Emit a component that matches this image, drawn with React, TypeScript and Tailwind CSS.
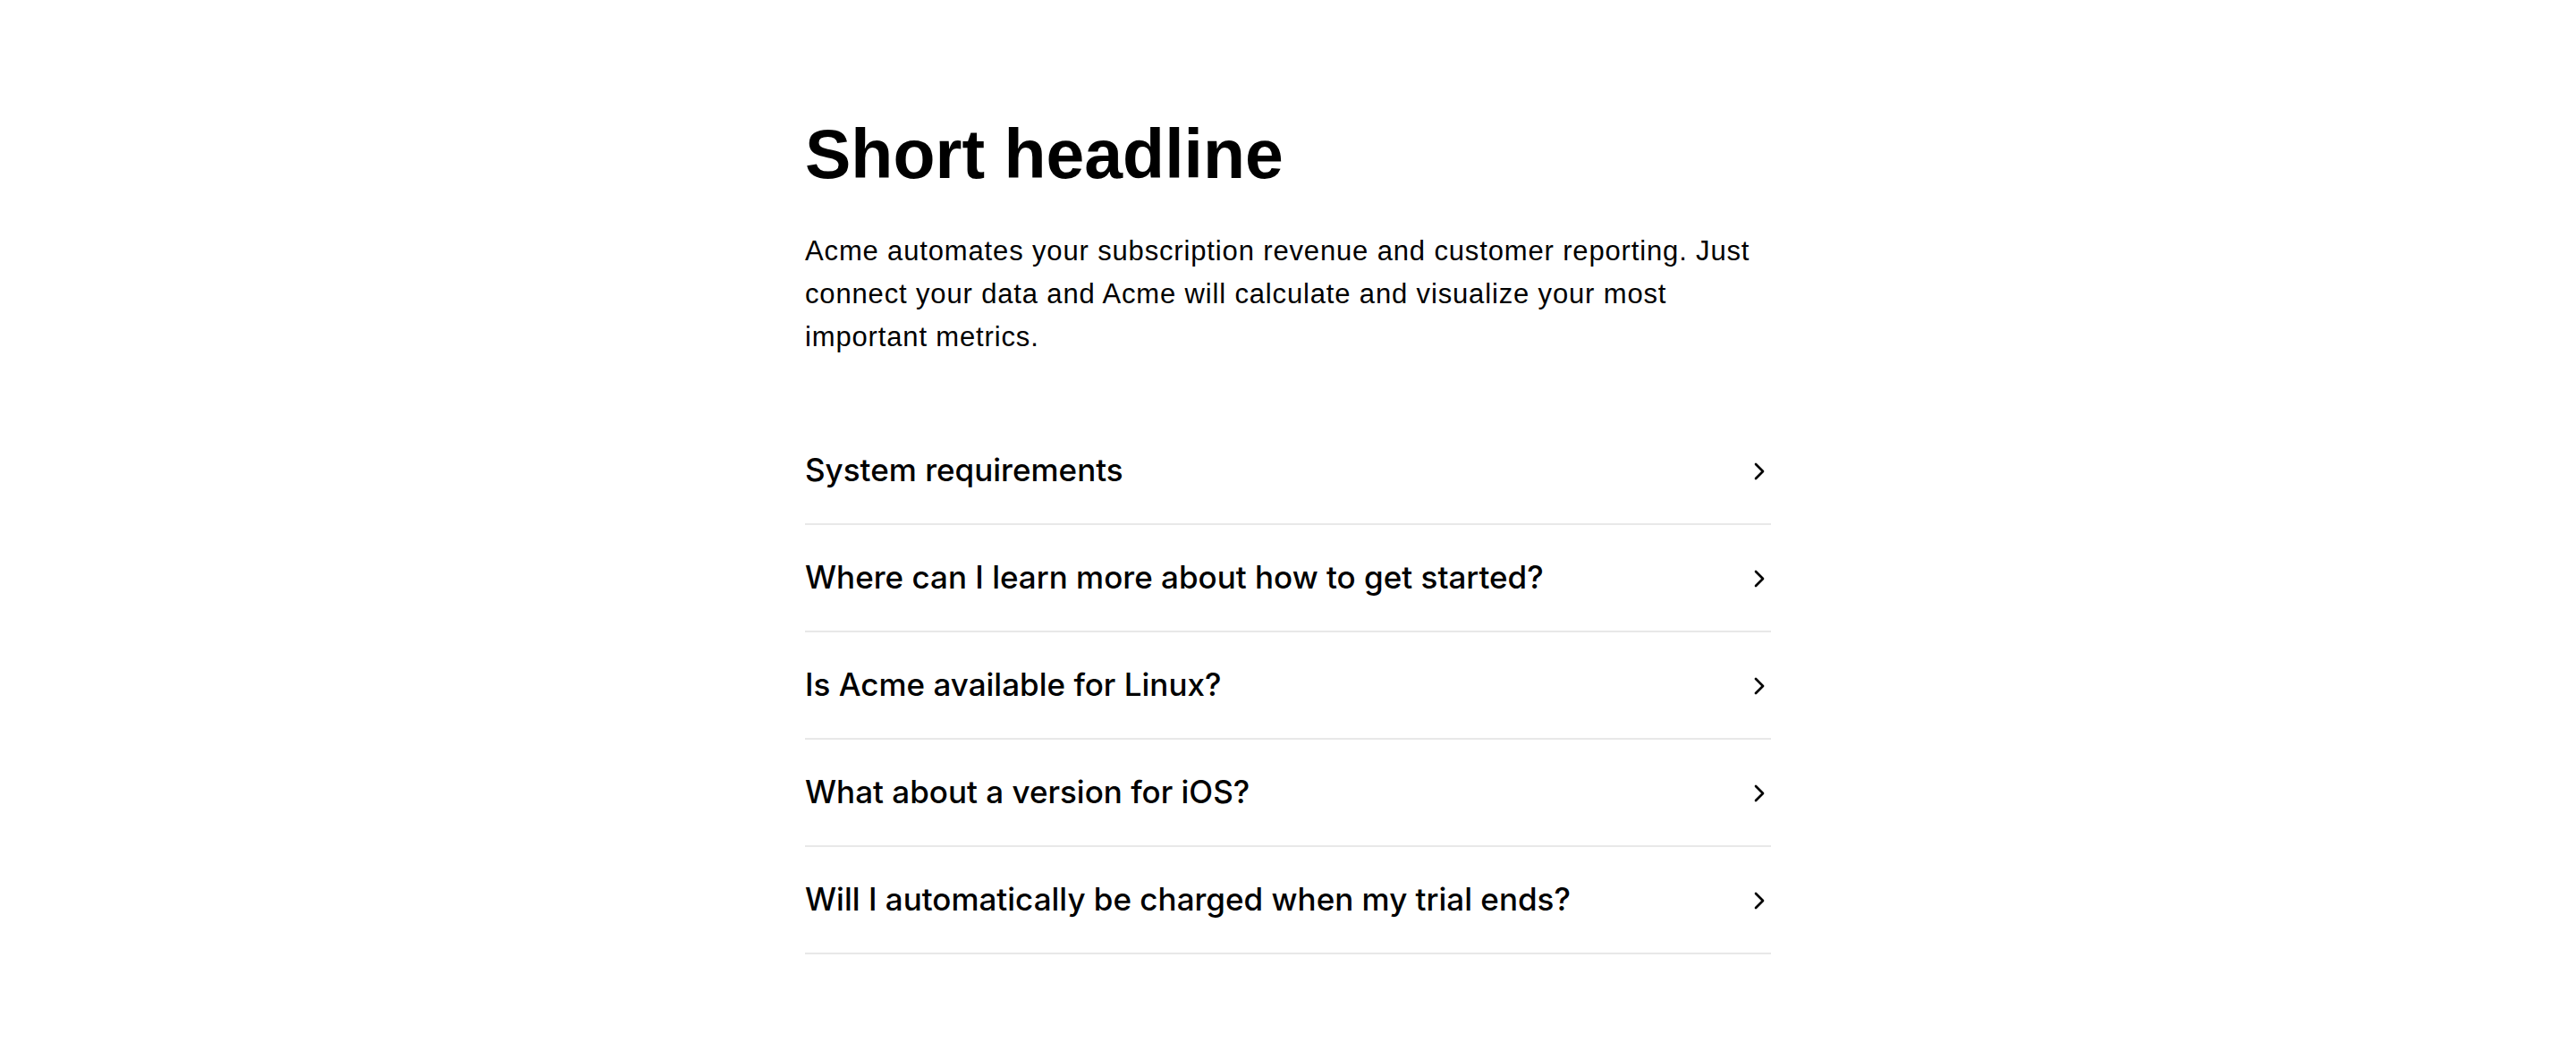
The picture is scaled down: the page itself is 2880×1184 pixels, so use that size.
import { ChevronRight } from "lucide-react";

const questions = [
  "System requirements",
  "Where can I learn more about how to get started?",
  "Is Acme available for Linux?",
  "What about a version for iOS?",
  "Will I automatically be charged when my trial ends?",
];

export default function App() {
  return (
    <div className="min-h-screen bg-white text-black font-['Liberation_Sans',Arial,sans-serif]">
      <section className="mx-auto w-[1080px] pt-[134px] pb-[100px]">
        <h1 className="text-[77px] font-bold leading-none">Short headline</h1>
        <p className="mt-[46px] text-[31px] leading-[48px] tracking-[0.85px]">
          Acme automates your subscription revenue and customer reporting. Just
          connect your data and Acme will calculate and visualize your most
          important metrics.
        </p>

        <ul className="mt-[66px]">
          {questions.map((q) => (
            <li
              key={q}
              className="flex h-[120px] items-center justify-between border-b-2 border-[#e8e8e8] pb-[2px]"
            >
              <span className="font-['Inter',sans-serif] text-[35px] font-medium leading-none">
                {q}
              </span>
              <ChevronRight size={32} strokeWidth={2} className="mr-[-3px] mt-[3px]" />
            </li>
          ))}
        </ul>
      </section>
    </div>
  );
}
